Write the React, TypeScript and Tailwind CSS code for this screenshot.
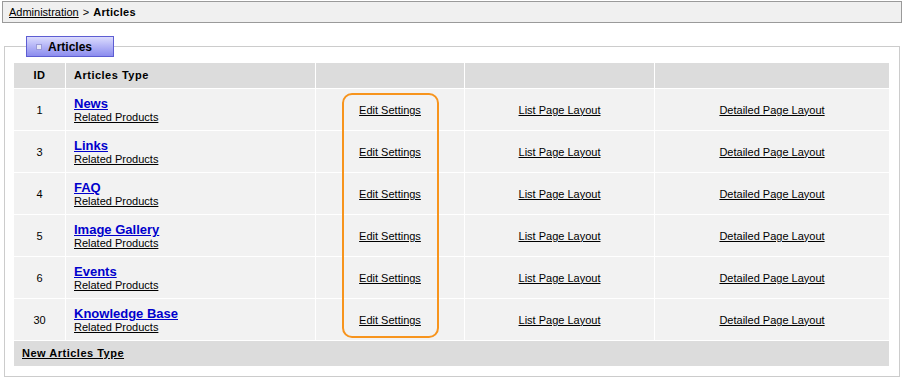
import React from "react";

const rows = [
  { id: "1", name: "News" },
  { id: "3", name: "Links" },
  { id: "4", name: "FAQ" },
  { id: "5", name: "Image Gallery" },
  { id: "6", name: "Events" },
  { id: "30", name: "Knowledge Base" },
];

export default function App() {
  return (
    <div
      className="relative w-[904px] h-[380px] bg-white text-black text-[11px]"
      style={{ fontFamily: '"Liberation Sans", Arial, sans-serif' }}
    >
      <div className="ml-[2px] mt-[1px] w-[900px] h-[22px] border border-[#9a9a9a] bg-[#f0f0f0] flex items-center pl-[6px] leading-none">
        <a className="underline text-black cursor-pointer">Administration</a>
        <span className="mx-[4px]">&gt;</span>
        <b className="tracking-[0.3px]">Articles</b>
      </div>

      <fieldset className="ml-[4px] mt-[13px] w-[896px] border border-[#cccccc] pl-[8px] pr-[8px] pt-[5px] pb-[9px]">
        <legend className="ml-[13px] h-[21px] w-[88px] border border-[#5d5dd2] bg-gradient-to-b from-[#dcdcfd] via-[#b3b3f6] to-[#8c8cee] flex items-center pl-[9px] gap-[6px]">
          <span className="w-[6px] h-[6px] bg-[#e6e6f6] border border-[#9a9ad8]" />
          <span className="font-bold text-[12px] leading-none text-black">Articles</span>
        </legend>

        <table className="border-separate border-spacing-px table-fixed w-[877px] bg-white">
          <thead>
            <tr className="h-[25px]">
              <th className="w-[51px] bg-[#dcdcdc] p-0 text-center font-bold tracking-[0.5px]">ID</th>
              <th className="w-[249px] bg-[#dcdcdc] p-0 pl-[8px] text-left font-bold tracking-[0.5px]">Articles Type</th>
              <th className="w-[148px] bg-[#dcdcdc] p-0"></th>
              <th className="w-[189px] bg-[#dcdcdc] p-0"></th>
              <th className="bg-[#dcdcdc] p-0"></th>
            </tr>
          </thead>
          <tbody>
            {rows.map((r) => (
              <tr key={r.id} className="h-[41px]">
                <td className="bg-[#f2f2f2] p-0 pt-[1px] text-center align-middle">{r.id}</td>
                <td className="bg-[#f2f2f2] p-0 pt-[1px] pl-[8px] align-middle">
                  <div className="flex flex-col">
                    <a className="text-[13px] font-bold text-[#0000cc] underline leading-[15px] cursor-pointer">
                      {r.name}
                    </a>
                    <a className="underline text-black leading-[13px] cursor-pointer">Related Products</a>
                  </div>
                </td>
                <td className="bg-[#f2f2f2] p-0 pt-[1px] text-center align-middle">
                  <a className="underline text-black cursor-pointer">Edit Settings</a>
                </td>
                <td className="bg-[#f2f2f2] p-0 pt-[1px] text-center align-middle">
                  <a className="underline text-black cursor-pointer">List Page Layout</a>
                </td>
                <td className="bg-[#f2f2f2] p-0 pt-[1px] text-center align-middle">
                  <a className="underline text-black cursor-pointer">Detailed Page Layout</a>
                </td>
              </tr>
            ))}
          </tbody>
          <tfoot>
            <tr className="h-[25px]">
              <td colSpan={5} className="bg-[#dcdcdc] p-0 pl-[8px] align-middle">
                <a className="font-bold underline text-black cursor-pointer tracking-[0.5px]">New Articles Type</a>
              </td>
            </tr>
          </tfoot>
        </table>
      </fieldset>

      <div className="absolute left-[342px] top-[92px] w-[97px] h-[245px] border-2 border-[#f7941d] rounded-[10px] pointer-events-none" />
    </div>
  );
}
